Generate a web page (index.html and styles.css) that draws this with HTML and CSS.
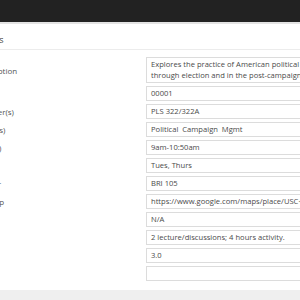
FILE: index.html
```
<!DOCTYPE html>
<html lang="en">
  <head>
    <meta charset="UTF-8" />
    <title>Course Details</title>
    <link rel="stylesheet" href="styles.css">
  </head>
  <body>
    <div class="topbar"></div>
    <div class="strip"></div>

    <div class="panel">
      <div class="panel-title">Course Details</div>

      <!-- Course fields -->
      <div class="form">
        <div class="row">
          <label class="field-label">Course Description</label>
          <div class="field field-area">Explores the practice of American political campaigns through election and in the post-campaign period.</div>
        </div>
        <div class="row">
          <label class="field-label">Section</label>
          <div class="field">00001</div>
        </div>
        <div class="row">
          <label class="field-label">Course Number(s)</label>
          <div class="field">PLS 322/322A</div>
        </div>
        <div class="row">
          <label class="field-label">Course Name(s)</label>
          <div class="field">Political &nbsp;Campaign &nbsp;Mgmt</div>
        </div>
        <div class="row">
          <label class="field-label">Course Time(s)</label>
          <div class="field">9am-10:50am</div>
        </div>
        <div class="row">
          <label class="field-label">Course Day(s)</label>
          <div class="field">Tues, Thurs</div>
        </div>
        <div class="row">
          <label class="field-label">Room Number</label>
          <div class="field">BRI 105</div>
        </div>
        <div class="row">
          <label class="field-label">Classroom Map</label>
          <div class="field">https://www.google.com/maps/place/USC+Bridge+Hall</div>
        </div>
        <div class="row">
          <label class="field-label">Prerequisites</label>
          <div class="field">N/A</div>
        </div>
        <div class="row">
          <label class="field-label">Format</label>
          <div class="field">2 lecture/discussions; 4 hours activity.</div>
        </div>
        <div class="row">
          <label class="field-label">Units</label>
          <div class="field">3.0</div>
        </div>
        <div class="row">
          <label class="field-label">Notes</label>
          <div class="field"></div>
        </div>
      </div>
    </div>
  </body>
</html>
```

FILE: styles.css
```
body {
  margin: 0;
  height: 300px;
  overflow: hidden;
  background: #efefef;
  font-family: "Open Sans", sans-serif;
  color: #555;
}

.topbar {
  height: 22px;
  background: #222;
}

.strip {
  height: 2px;
  background: #e3e3e3;
}

.panel {
  background: #fff;
  height: 266px;
  overflow: hidden;
}

.panel-title {
  height: 25px;
  line-height: 32px;
  margin-left: -57px;
  font-size: 9px;
  color: #444;
  border-bottom: 1px solid #ececec;
  white-space: nowrap;
}

.form {
  margin-left: -54px;
  padding-top: 7px;
  display: flex;
  flex-direction: column;
  gap: 3px;
}

.row {
  display: grid;
  grid-template-columns: 200px 320px;
  align-items: center;
}

.field-label {
  font-size: 8px;
  color: #555;
  white-space: nowrap;
}

.field {
  height: 13px;
  line-height: 13px;
  padding: 0 4px;
  border: 1px solid #dcdcdc;
  font-size: 7.6px;
  color: #4a4a4a;
  white-space: nowrap;
  overflow: hidden;
}

.field-area {
  width: 200px;
  height: 23px;
  padding: 1px 4px 0;
  line-height: 11px;
  white-space: normal;
}
```
